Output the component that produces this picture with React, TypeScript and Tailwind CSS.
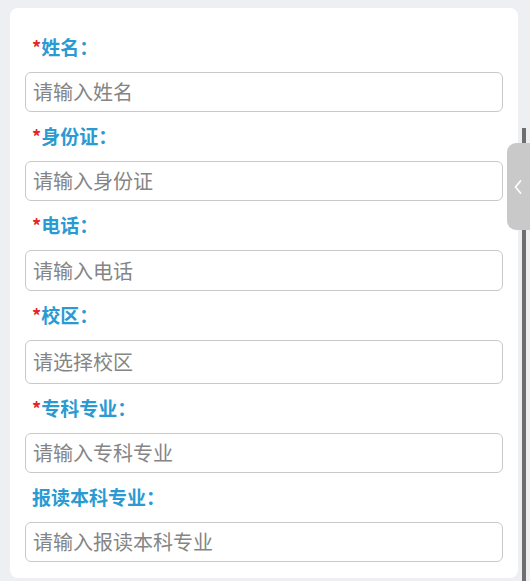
import React from "react";

const fields: { label: string; required: boolean; placeholder: string; h: string }[] = [
  { label: "姓名", required: true, placeholder: "请输入姓名", h: "h-[40px]" },
  { label: "身份证", required: true, placeholder: "请输入身份证", h: "h-[40px]" },
  { label: "电话", required: true, placeholder: "请输入电话", h: "h-[41px]" },
  { label: "校区", required: true, placeholder: "请选择校区", h: "h-[44px]" },
  { label: "专科专业", required: true, placeholder: "请输入专科专业", h: "h-[40px]" },
  { label: "报读本科专业", required: false, placeholder: "请输入报读本科专业", h: "h-[40px]" },
];

export default function App() {
  return (
    <div
      className="relative w-[530px] h-[581px] bg-[#eeeff3] pt-[8px] pl-[10px] overflow-hidden"
      style={{ fontFamily: '"Noto Sans CJK SC", "Noto Sans", sans-serif' }}
    >
      <div className="w-[508px] bg-white rounded-[8px] pt-[15px] pb-[16px] px-[15px]">
        {fields.map((f) => (
          <div key={f.label}>
            <div className="pt-[12px] pb-[13px] pl-[7px] h-[49px] flex items-center text-[19px] leading-[24px] font-bold text-[#2a9bd2]">
              {f.required && <span className="text-[#e3262b] text-[18px]">*</span>}
              <span>{f.label}：</span>
            </div>
            <div
              className={`${f.h} w-[478px] border border-[#c9c9c9] rounded-[6px] flex items-center pl-[7px] text-[20px] text-[#858585]`}
            >
              {f.placeholder}
            </div>
          </div>
        ))}
      </div>
      <div className="absolute left-[522px] top-[128px] w-[4px] h-[453px] bg-[#6f6f6f]" />
      <div className="absolute left-[507px] top-[143px] w-[26px] h-[87px] bg-[#c9c9c9] rounded-l-[9px] flex items-center justify-center pr-[4px]">
        <svg width="10" height="16" viewBox="0 0 10 16" fill="none">
          <path d="M7.5 2 L2.5 8 L7.5 14" stroke="white" strokeWidth="1.7" strokeLinecap="round" strokeLinejoin="round" />
        </svg>
      </div>
    </div>
  );
}
